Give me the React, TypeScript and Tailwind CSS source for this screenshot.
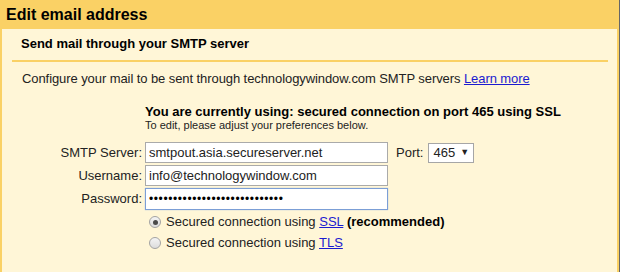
import React from "react";

const font = { fontFamily: '"Liberation Sans", Arial, sans-serif' };

function Radio({ checked }: { checked?: boolean }) {
  return (
    <span className="flex h-[12px] w-[12px] items-center justify-center rounded-full border border-[#a3a3a3] bg-gradient-to-b from-[#f4f4f4] to-[#dcdcdc]">
      {checked && <span className="h-[5px] w-[5px] rounded-full bg-[#4a4a4a]" />}
    </span>
  );
}

export default function App() {
  return (
    <div
      className="flex h-[272px] w-[620px] flex-col border-r border-[#666] bg-[#fad165] text-[13px] text-[#222]"
      style={font}
    >
      {/* header */}
      <div className="h-[29px] pl-[6px] text-[16px] font-bold leading-[30px] text-black">
        Edit email address
      </div>

      {/* body */}
      <div className="ml-[2px] mr-[2px] flex-1 bg-[#fff6d7]">
        <div className="ml-[10px] mr-[9px] border-b-2 border-[#fad165] pb-[9px] pl-[9px] pt-[7px] font-bold leading-[15px] text-black">
          Send mail through your SMTP server
        </div>

        <div className="pl-[20px] pt-[9px] leading-[15px] tracking-[-0.08px]">
          Configure your mail to be sent through technologywindow.com SMTP servers{" "}
          <a className="text-[#1b1bd0] underline">Learn more</a>
        </div>

        <div className="pl-[143px] pt-[19px]">
          <div className="font-bold leading-[14px] text-black">
            You are currently using: secured connection on port 465 using SSL
          </div>
          <div className="text-[11px] leading-[12px]">To edit, please adjust your preferences below.</div>
        </div>

        <div className="mt-[11px] grid grid-cols-[140px_auto] items-center gap-x-[3px] gap-y-[2px]">
          <div className="text-right">SMTP Server:</div>
          <div className="flex items-center">
            <div className="flex h-[21px] w-[243px] items-center border border-[#aaa] bg-white pl-[3px]">
              smtpout.asia.secureserver.net
            </div>
            <span className="ml-[8px]">Port:</span>
            <div className="ml-[5px] flex h-[20px] w-[46px] items-center border border-[#a6a6a6] bg-white pl-[4px]">
              465
              <span className="ml-[5px] text-[9px]">▼</span>
            </div>
          </div>

          <div className="text-right">Username:</div>
          <div className="flex h-[21px] w-[243px] items-center border border-[#aaa] bg-white pl-[3px]">
            info@technologywindow.com
          </div>

          <div className="text-right">Password:</div>
          <div className="flex h-[22px] w-[243px] items-center border border-[#7b9ed6] bg-white pl-[3px] text-[12px] tracking-[0.6px] text-black shadow-[0_0_1px_#9bb7e6]">
            ••••••••••••••••••••••••••••
          </div>
        </div>

        <div className="mt-[5px] flex flex-col gap-[7px] pl-[147px]">
          <label className="flex items-center gap-[5px] leading-[14px]">
            <Radio checked />
            <span>
              Secured connection using <a className="text-[#1b1bd0] underline">SSL</a>{" "}
              <b className="text-black">(recommended)</b>
            </span>
          </label>
          <label className="flex items-center gap-[5px] leading-[14px]">
            <Radio />
            <span>
              Secured connection using <a className="text-[#1b1bd0] underline">TLS</a>
            </span>
          </label>
        </div>
      </div>
    </div>
  );
}
